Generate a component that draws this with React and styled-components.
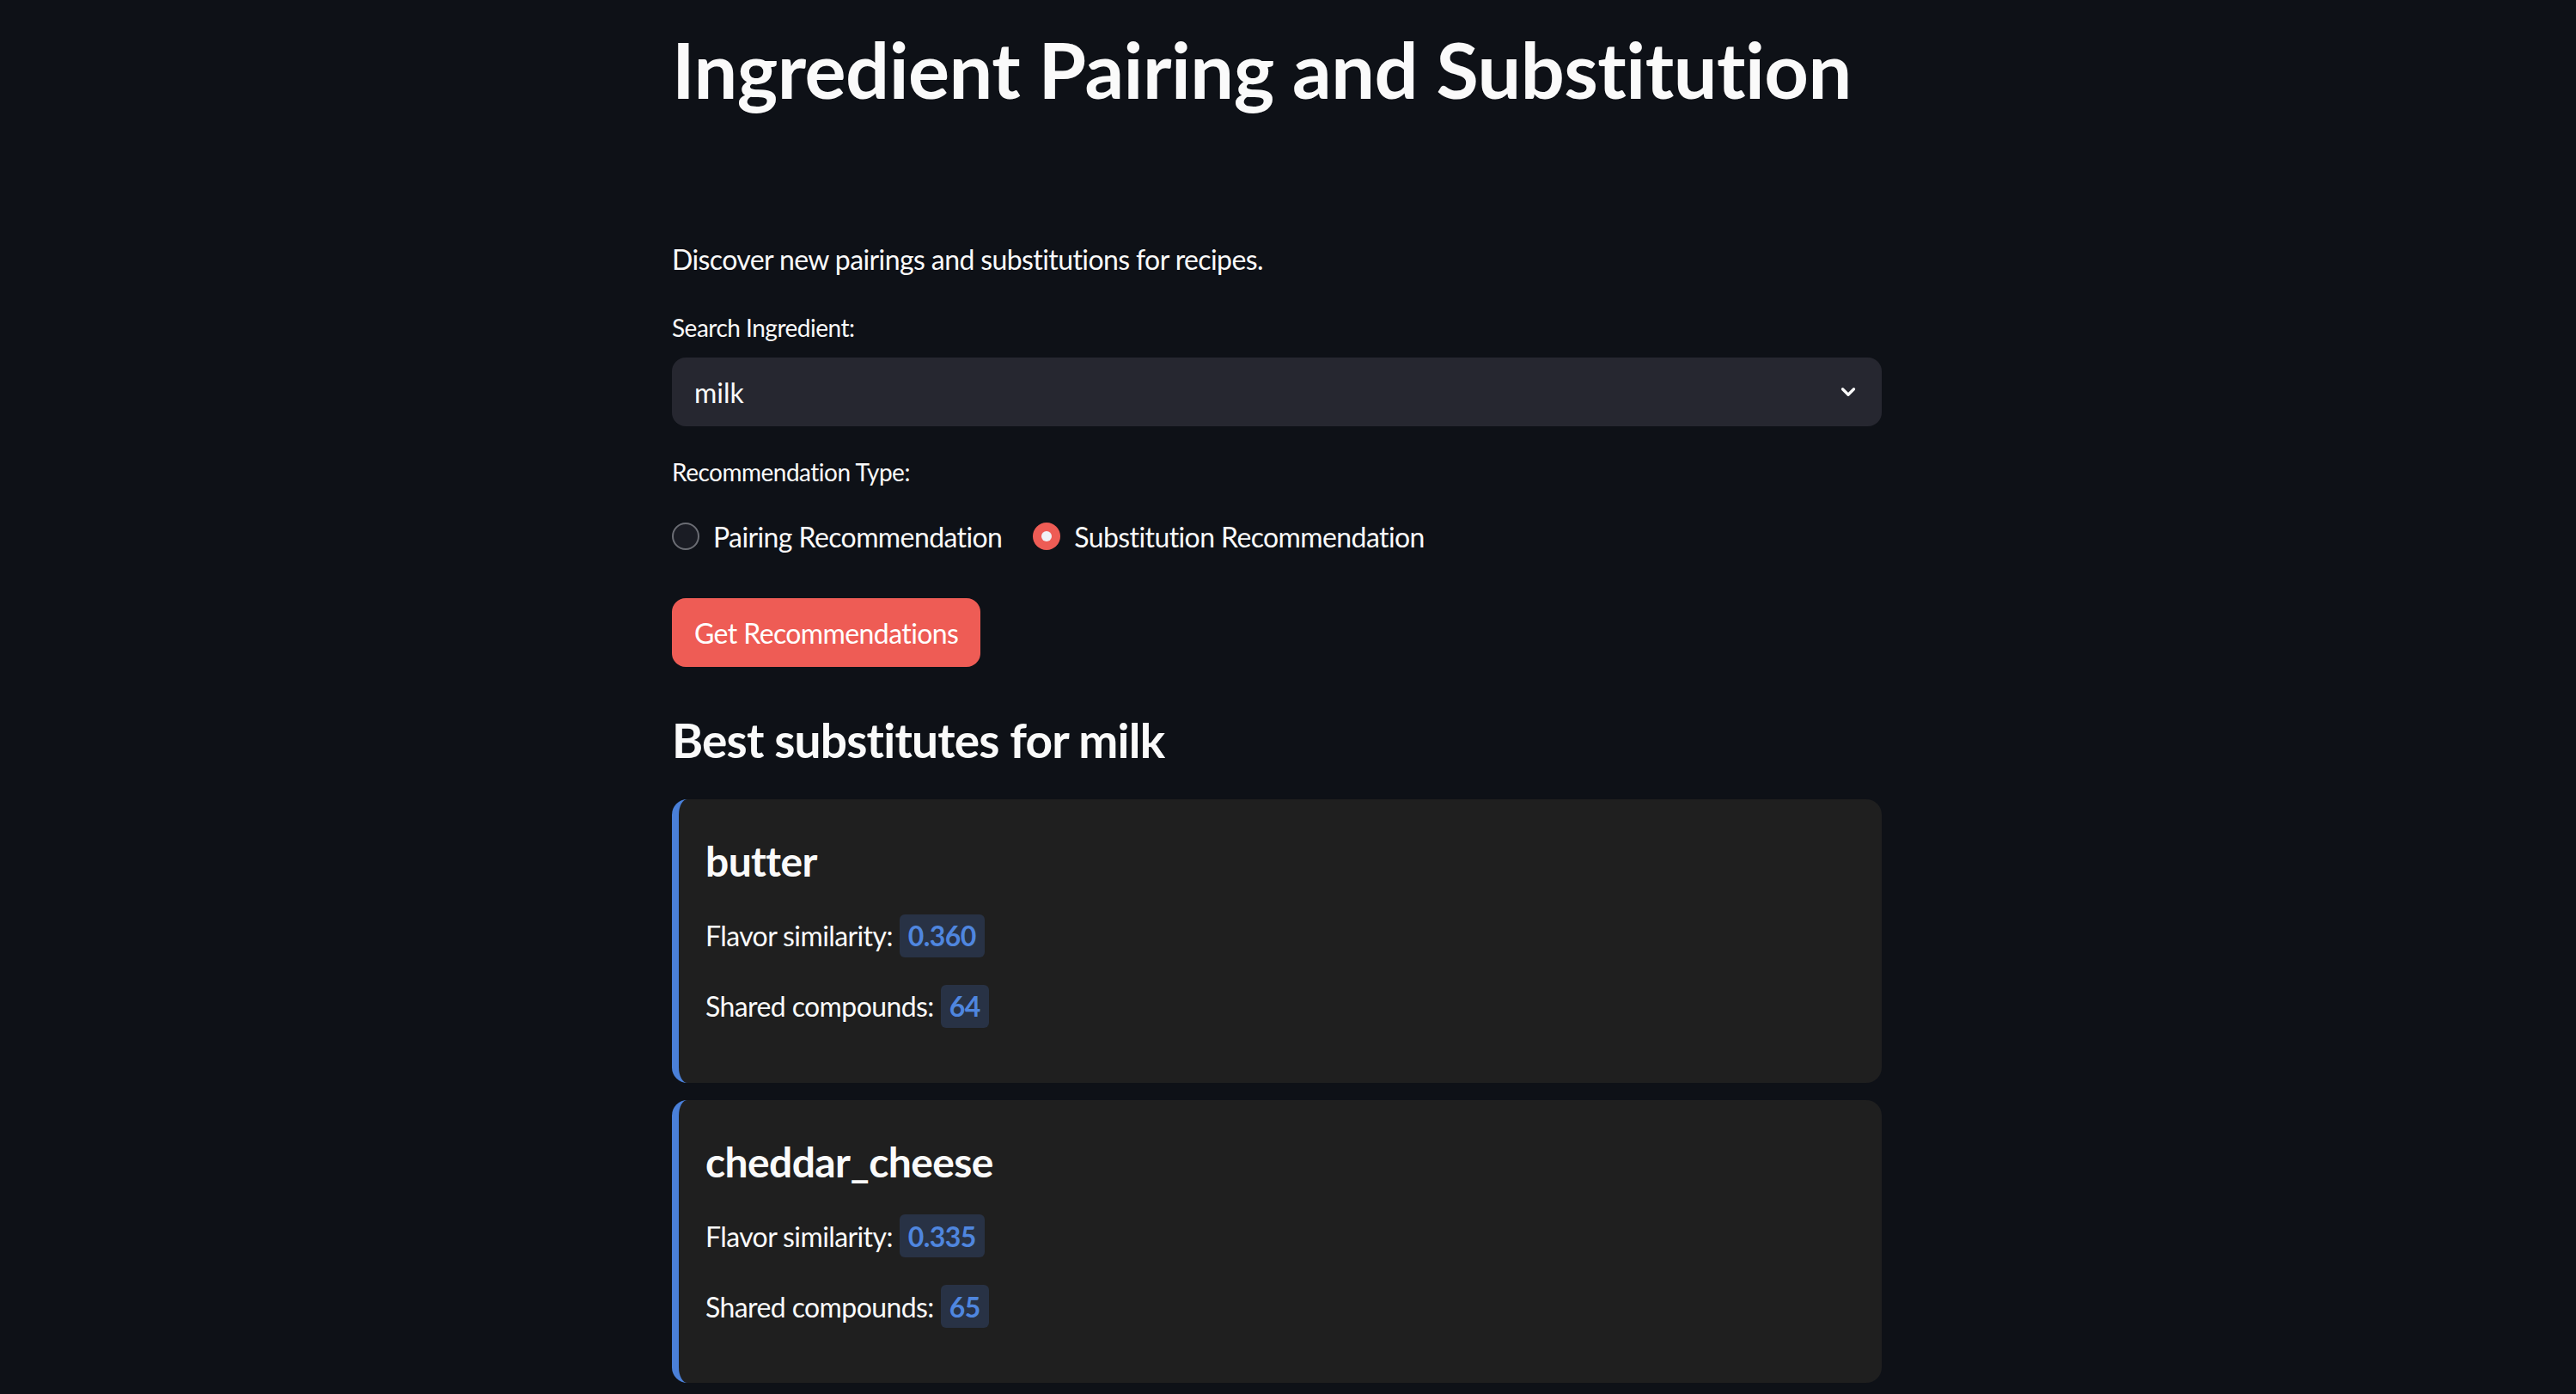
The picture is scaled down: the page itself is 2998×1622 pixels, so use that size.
import styled, { createGlobalStyle } from 'styled-components';
import { ChevronDown } from 'lucide-react';

const GlobalStyle = createGlobalStyle`
    html, body {
        margin: 0;
        padding: 0;
        background: #0e1117;
        color: #fafafa;
        font-family: Lato, "Noto Sans", sans-serif;
    }
`;

const Page = styled.div`
    display: flex;
    justify-content: center;
    padding: 26px 26px 40px 0px;
    min-height: 1622px;
    box-sizing: border-box;
`;
const Column = styled.div`
    width: 1408px;
    display: flex;
    flex-direction: column;
`;
const Title = styled.h1`
    font-size: 90px;
    font-weight: 700;
    line-height: 1.2;
    margin: 0 0 144px 0;
    letter-spacing: -0.5px;
`;
const Intro = styled.p`
    font-size: 32px;
    line-height: 1.5;
    margin: 0 0 34px 0;
    letter-spacing: -0.6px;
`;
const Label = styled.div`
    font-size: 28px;
    line-height: 1.5;
    margin-bottom: 14px;
    letter-spacing: -0.5px;
`;
const Select = styled.div`
    height: 80px;
    border-radius: 16px;
    background: #262730;
    display: flex;
    align-items: center;
    justify-content: space-between;
    padding: 0 26px;
    box-sizing: border-box;
    font-size: 32px;
    margin-bottom: 32px;
`;
const RadioGroup = styled.div`
    display: flex;
    align-items: center;
    gap: 36px;
    height: 64px;
    margin: 8px 0 40px 0;
`;
const RadioOption = styled.label`
    display: flex;
    align-items: center;
    gap: 16px;
    font-size: 32px;
    letter-spacing: -0.6px;
`;
const RadioDot = styled.span`
    width: 32px;
    height: 32px;
    border-radius: 50%;
    box-sizing: border-box;
    display: flex;
    align-items: center;
    justify-content: center;
    background: ${p => (p.$checked ? '#ee5c55' : '#1a1c24')};
    border: ${p => (p.$checked ? 'none' : '2px solid #6b6d74')};
    &::after {
        content: '';
        display: ${p => (p.$checked ? 'block' : 'none')};
        width: 12px;
        height: 12px;
        border-radius: 50%;
        background: #f0f2f6;
    }
`;
const Button = styled.button`
    align-self: flex-start;
    height: 80px;
    padding: 0 26px;
    border: none;
    border-radius: 16px;
    background: #ee5c55;
    color: #fff;
    font-family: inherit;
    font-size: 32px;
    letter-spacing: -0.6px;
    margin-bottom: 52px;
`;
const SectionHeading = styled.h3`
    font-size: 55px;
    font-weight: 700;
    line-height: 1.2;
    margin: 0 0 36px 0;
    letter-spacing: -0.8px;
`;
const CardList = styled.div`
    display: flex;
    flex-direction: column;
    gap: 20px;
`;
const Card = styled.div`
    background: #1f1f1f;
    border-left: 8px solid #4a80d9;
    border-radius: 18px;
    padding: 43px 32px 64px 31px;
    display: flex;
    flex-direction: column;
`;
const CardTitle = styled.h3`
    font-size: 48px;
    font-weight: 700;
    line-height: 1.2;
    margin: 0 0 33px 0;
    letter-spacing: -0.6px;
`;
const StatRow = styled.div`
    display: flex;
    align-items: center;
    gap: 8px;
    height: 50px;
    font-size: 32px;
    letter-spacing: -0.6px;
    & + & {
        margin-top: 32px;
    }
`;
const Badge = styled.span`
    display: inline-flex;
    align-items: center;
    height: 50px;
    padding: 0 10px;
    border-radius: 6px;
    background: #283245;
    color: #4f86df;
    font-weight: 700;
`;

const results = [
    { name: 'butter', similarity: '0.360', shared: 64 },
    { name: 'cheddar_cheese', similarity: '0.335', shared: 65 },
];

const App = () => {
    return (
        <Page>
            <GlobalStyle />
            <Column>
                <Title>Ingredient Pairing and Substitution</Title>
                <Intro>Discover new pairings and substitutions for recipes.</Intro>
                <Label>Search Ingredient:</Label>
                <Select>
                    <span>milk</span>
                    <ChevronDown size={26} strokeWidth={3} />
                </Select>
                <Label>Recommendation Type:</Label>
                <RadioGroup>
                    <RadioOption><RadioDot />Pairing Recommendation</RadioOption>
                    <RadioOption><RadioDot $checked />Substitution Recommendation</RadioOption>
                </RadioGroup>
                <Button>Get Recommendations</Button>
                <SectionHeading>Best substitutes for milk</SectionHeading>
                <CardList>
                    {results.map((r) => (
                        <Card key={r.name}>
                            <CardTitle>{r.name}</CardTitle>
                            <StatRow>Flavor similarity: <Badge>{r.similarity}</Badge></StatRow>
                            <StatRow>Shared compounds: <Badge>{r.shared}</Badge></StatRow>
                        </Card>
                    ))}
                </CardList>
            </Column>
        </Page>
    );
}

export default App;
